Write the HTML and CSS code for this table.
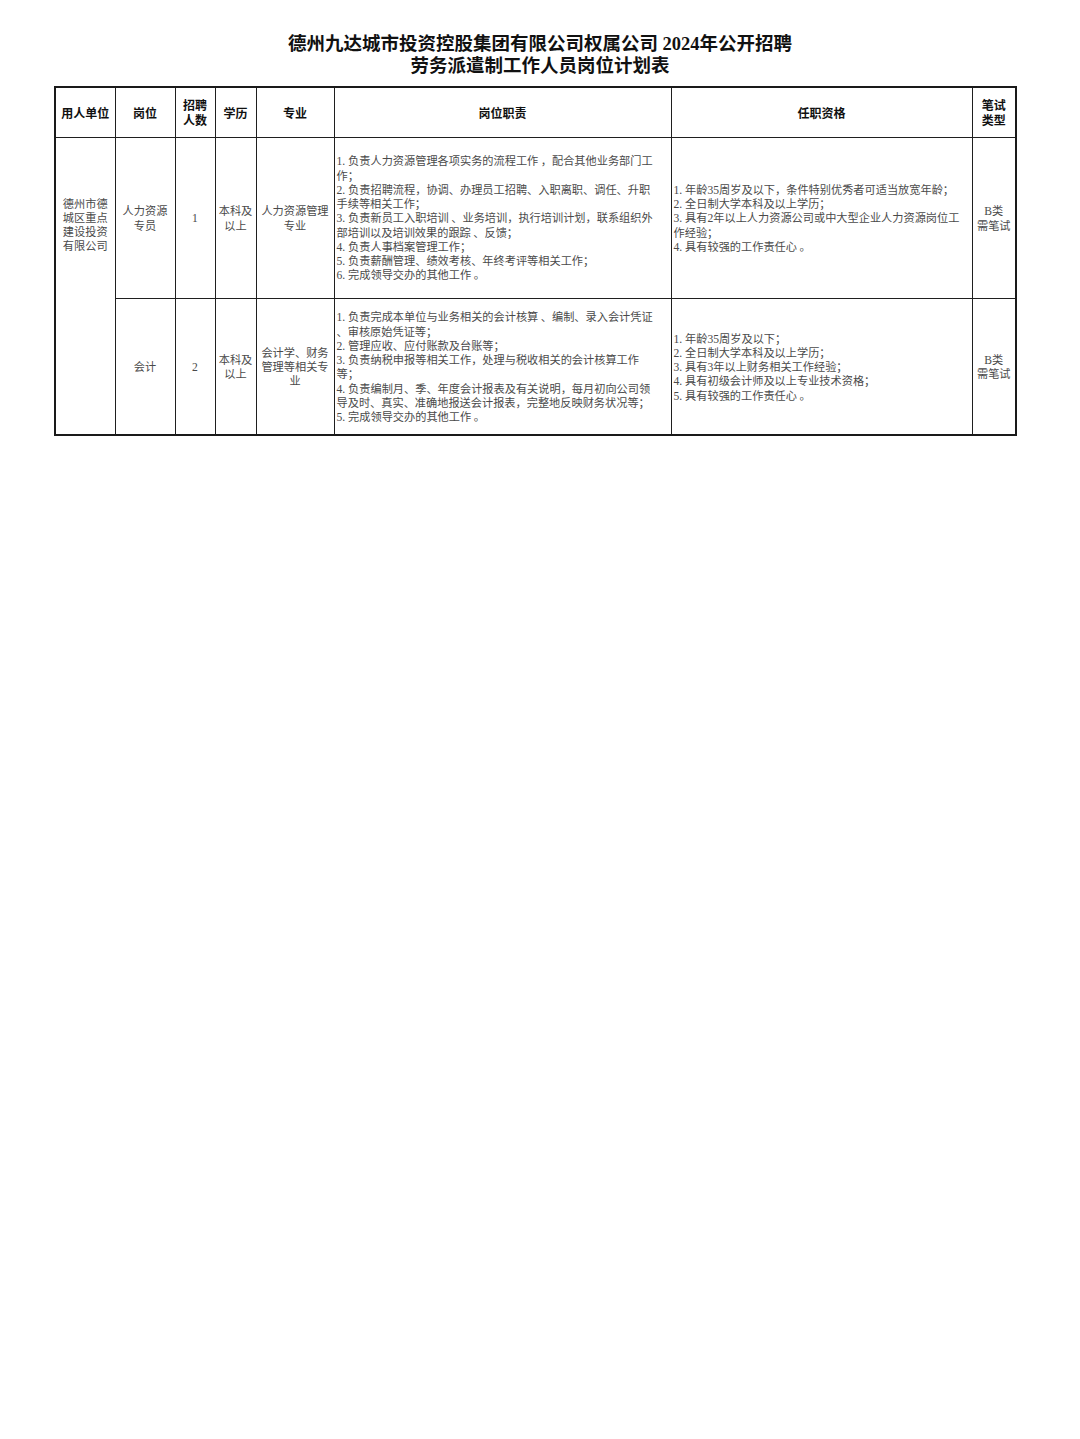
FILE: index.html
```html
<!DOCTYPE html>
<html lang="zh-CN">
<head>
<meta charset="utf-8">
<title>岗位计划表</title>
<link rel="stylesheet" href="styles.css">
</head>
<body>
<div class="page">
  <h1 class="title">
    <span class="title-line">德州九达城市投资控股集团有限公司权属公司 2024年公开招聘</span>
    <span class="title-line">劳务派遣制工作人员岗位计划表</span>
  </h1>
  <table class="plan">
    <colgroup>
      <col class="c-unit">
      <col class="c-post">
      <col class="c-num">
      <col class="c-edu">
      <col class="c-major">
      <col class="c-duty">
      <col class="c-qual">
      <col class="c-exam">
    </colgroup>
    <thead>
      <tr class="head-row">
        <th>用人单位</th>
        <th>岗位</th>
        <th>招聘<br>人数</th>
        <th>学历</th>
        <th>专业</th>
        <th>岗位职责</th>
        <th>任职资格</th>
        <th>笔试<br>类型</th>
      </tr>
    </thead>
    <tbody>
      <tr class="row-1">
        <td rowspan="2" class="center unit">德州市德<br>城区重点<br>建设投资<br>有限公司</td>
        <td class="center">人力资源<br>专员</td>
        <td class="center"><span class="n">1</span></td>
        <td class="center">本科及<br>以上</td>
        <td class="center">人力资源管理<br>专业</td>
        <td class="left"><span class="n">1. </span>负责人力资源管理各项实务的流程工作 ，配合其他业务部门工<br>作；<br><span class="n">2. </span>负责招聘流程，协调、办理员工招聘、入职离职、调任、升职<br>手续等相关工作；<br><span class="n">3. </span>负责新员工入职培训 、业务培训，执行培训计划，联系组织外<br>部培训以及培训效果的跟踪 、反馈；<br><span class="n">4. </span>负责人事档案管理工作；<br><span class="n">5. </span>负责薪酬管理、绩效考核、年终考评等相关工作；<br><span class="n">6. </span>完成领导交办的其他工作 。</td>
        <td class="left"><span class="n">1. </span>年龄<span class="n">35</span>周岁及以下，条件特别优秀者可适当放宽年龄；<br><span class="n">2. </span>全日制大学本科及以上学历；<br><span class="n">3. </span>具有<span class="n">2</span>年以上人力资源公司或中大型企业人力资源岗位工<br>作经验；<br><span class="n">4. </span>具有较强的工作责任心 。</td>
        <td class="center"><span class="n">B</span>类<br>需笔试</td>
      </tr>
      <tr class="row-2">
        <td class="center">会计</td>
        <td class="center"><span class="n">2</span></td>
        <td class="center">本科及<br>以上</td>
        <td class="center">会计学、财务<br>管理等相关专<br>业</td>
        <td class="left"><span class="n">1. </span>负责完成本单位与业务相关的会计核算 、编制、录入会计凭证<br>、审核原始凭证等；<br><span class="n">2. </span>管理应收、应付账款及台账等；<br><span class="n">3. </span>负责纳税申报等相关工作，处理与税收相关的会计核算工作<br>等；<br><span class="n">4. </span>负责编制月、季、年度会计报表及有关说明，每月初向公司领<br>导及时、真实、准确地报送会计报表，完整地反映财务状况等；<br><span class="n">5. </span>完成领导交办的其他工作 。</td>
        <td class="left"><span class="n">1. </span>年龄<span class="n">35</span>周岁及以下；<br><span class="n">2. </span>全日制大学本科及以上学历；<br><span class="n">3. </span>具有<span class="n">3</span>年以上财务相关工作经验；<br><span class="n">4. </span>具有初级会计师及以上专业技术资格；<br><span class="n">5. </span>具有较强的工作责任心 。</td>
        <td class="center"><span class="n">B</span>类<br>需笔试</td>
      </tr>
    </tbody>
  </table>
</div>
</body>
</html>
```

FILE: styles.css
```css
html, body {
  margin: 0;
  padding: 0;
  background: #ffffff;
}

.page {
  width: 1080px;
  padding-top: 33px;
  display: flex;
  flex-direction: column;
  align-items: center;
}

.title {
  margin: 0 0 9px 0;
  font-family: "Liberation Serif", "Noto Sans CJK SC", serif;
  font-weight: 700;
  font-size: 18.5px;
  line-height: 22px;
  color: #111;
  display: flex;
  flex-direction: column;
  align-items: center;
}

.title-line {
  display: block;
  white-space: nowrap;
  height: 22px;
}

.n {
  font-family: "Liberation Serif", serif;
  line-height: 0;
}

.plan {
  width: 961px;
  margin-left: -9px;
  border-collapse: collapse;
  table-layout: fixed;
  border: 2px solid #1a1a1a;
}

.c-unit { width: 60px; }
.c-post { width: 60px; }
.c-num { width: 40px; }
.c-edu { width: 41px; }
.c-major { width: 78px; }
.c-duty { width: 337px; }
.c-qual { width: 301px; }
.c-exam { width: 44px; }

.plan th,
.plan td {
  border: 1.5px solid #1f1f1f;
  padding: 0 2px;
}

.plan th {
  font-family: "Noto Sans CJK SC", sans-serif;
  font-weight: 700;
  font-size: 12px;
  line-height: 15px;
  color: #111;
  text-align: center;
  vertical-align: middle;
}

.head-row { height: 50px; }
.row-1 { height: 161px; }
.row-2 { height: 137px; }

.plan td {
  font-family: "Noto Sans CJK SC", sans-serif;
  font-weight: 400;
  font-size: 11.2px;
  line-height: 14.25px;
  color: #4a4a4a;
  vertical-align: middle;
  white-space: nowrap;
}

.plan td .n {
  font-size: 11.6px;
}

.plan td.center { text-align: center; }
.plan td.left { text-align: left; padding-left: 2px; }

.plan td.unit {
  vertical-align: top;
  padding-top: 58px;
}
```
